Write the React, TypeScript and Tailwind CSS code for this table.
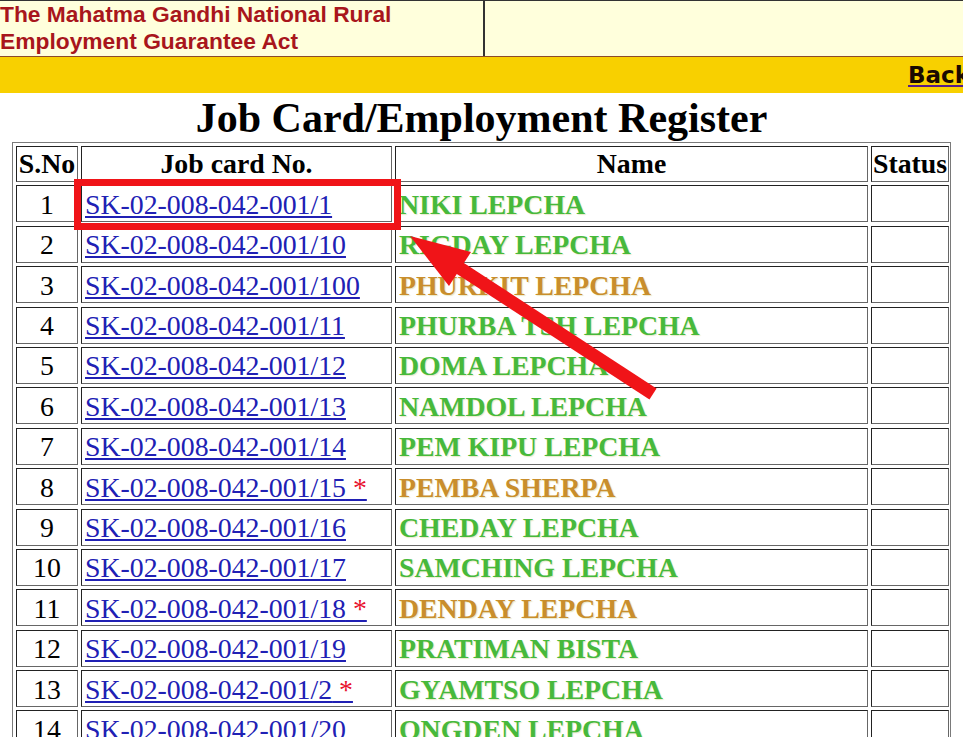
import React from 'react';

type Row = { no: number; card: string; name: string; star?: boolean; tone: 'green' | 'orange' };

const rows: Row[] = [
    { no: 1, card: 'SK-02-008-042-001/1', name: 'NIKI LEPCHA', tone: 'green' },
    { no: 2, card: 'SK-02-008-042-001/10', name: 'RIGDAY LEPCHA', tone: 'green' },
    { no: 3, card: 'SK-02-008-042-001/100', name: 'PHURKIT LEPCHA', tone: 'orange' },
    { no: 4, card: 'SK-02-008-042-001/11', name: 'PHURBA TSH LEPCHA', tone: 'green' },
    { no: 5, card: 'SK-02-008-042-001/12', name: 'DOMA LEPCHA', tone: 'green' },
    { no: 6, card: 'SK-02-008-042-001/13', name: 'NAMDOL LEPCHA', tone: 'green' },
    { no: 7, card: 'SK-02-008-042-001/14', name: 'PEM KIPU LEPCHA', tone: 'green' },
    { no: 8, card: 'SK-02-008-042-001/15', name: 'PEMBA SHERPA', star: true, tone: 'orange' },
    { no: 9, card: 'SK-02-008-042-001/16', name: 'CHEDAY LEPCHA', tone: 'green' },
    { no: 10, card: 'SK-02-008-042-001/17', name: 'SAMCHING LEPCHA', tone: 'green' },
    { no: 11, card: 'SK-02-008-042-001/18', name: 'DENDAY LEPCHA', star: true, tone: 'orange' },
    { no: 12, card: 'SK-02-008-042-001/19', name: 'PRATIMAN BISTA', tone: 'green' },
    { no: 13, card: 'SK-02-008-042-001/2', name: 'GYAMTSO LEPCHA', star: true, tone: 'green' },
    { no: 14, card: 'SK-02-008-042-001/20', name: 'ONGDEN LEPCHA', tone: 'green' },
];

const cell = 'border border-[#666] border-t-[#222] border-l-[#222] flex items-center';

export default function App() {
    return (
        <div className="relative w-full h-[737px] overflow-hidden bg-white font-['Liberation_Serif','Times_New_Roman',serif]">
            {/* top banner, wider than the window like the original page */}
            <div className="w-[1020px]">
                <div className="flex h-[57px] bg-[#ffffdc] border-t border-[#333] border-b border-b-[#8b4b2b]">
                    <div className="w-[485px] border-r-2 border-[#333] font-['Liberation_Sans',Arial,sans-serif] font-bold text-[22.8px] leading-[27px] text-[#a8161c]">
                        The Mahatma Gandhi National Rural
                        <br />
                        Employment Guarantee Act
                    </div>
                    <div className="flex-1" />
                </div>
                <div className="flex h-[36px] items-center justify-end bg-[#f8d000] pr-[50px]">
                    <a href="#" className="font-['DejaVu_Sans',Verdana,sans-serif] font-bold text-[23px] text-[#1a0a00] underline decoration-[#551a8b]">
                        Back
                    </a>
                </div>
            </div>

            <h1 className="mt-[2px] text-center text-[42px] font-bold leading-[46px] text-black">
                Job Card/Employment Register
            </h1>

            <div className="mx-[12px] mt-[1px] border border-[#7a7a7a] p-[3px]">
                <div className="grid grid-cols-[62px_311px_473px_78px] gap-x-[3px] gap-y-[3.4px] text-[27.8px] leading-[30px]">
                    <div className={`${cell} h-[36px] justify-center font-bold`}>S.No</div>
                    <div className={`${cell} h-[36px] justify-center font-bold`}>Job card No.</div>
                    <div className={`${cell} h-[36px] justify-center font-bold`}>Name</div>
                    <div className={`${cell} h-[36px] justify-center font-bold`}>Status</div>

                    {rows.map((r) => (
                        <React.Fragment key={r.no}>
                            <div className={`${cell} h-[37px] justify-center pt-[2px]`}>{r.no}</div>
                            <div className={`${cell} h-[37px] pl-[3px] pt-[2px]`}>
                                <a href="#" className="text-[#2020b4] underline decoration-[#2020b4]">
                                    {r.card}
                                    {r.star && <span className="text-[#e8102c]"> *</span>}
                                </a>
                            </div>
                            <div
                                className={`${cell} h-[37px] pl-[3px] pt-[2px] font-bold ${
                                    r.tone === 'green' ? 'text-[#47b93b]' : 'text-[#c98e2c]'
                                } [text-shadow:1px_1px_1px_rgba(200,200,120,0.4)]`}
                            >
                                {r.name}
                            </div>
                            <div className={`${cell} h-[37px]`} />
                        </React.Fragment>
                    ))}
                </div>
            </div>

            {/* red annotation: box around first job card + arrow */}
            <svg className="pointer-events-none absolute left-0 top-0" width="963" height="737">
                <rect x="77.5" y="182.5" width="320" height="44" fill="none" stroke="#f01418" strokeWidth="7" />
                <line x1="653" y1="394" x2="455" y2="265" stroke="#f01418" strokeWidth="13" />
                <polygon points="410,236 449,286 471,252" fill="#f01418" />
            </svg>
        </div>
    );
}
